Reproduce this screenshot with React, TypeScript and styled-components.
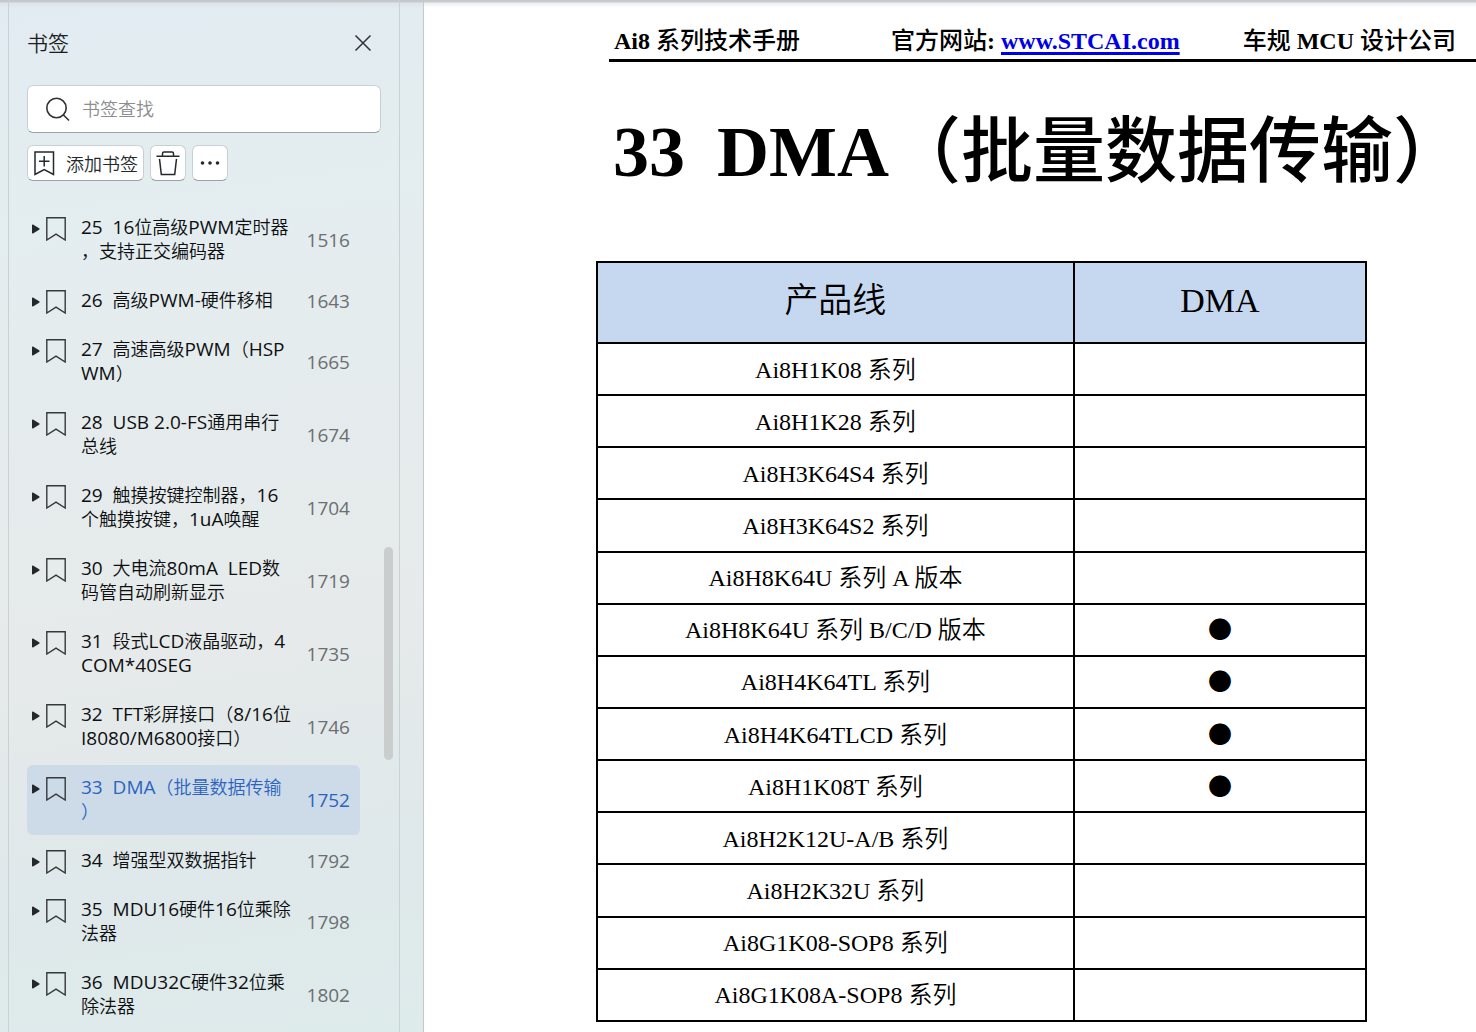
import React, { useState } from "react";
import styled, { createGlobalStyle } from "styled-components";

const GlobalStyle = createGlobalStyle`
  * { box-sizing: border-box; }
  body { margin: 0; background: #fff; }
  button, input { font: inherit; }
`;

const Window = styled.div`
  display: flex;
  height: 100vh;
  overflow: hidden;
  background:
    linear-gradient(#c3c7c9 0, #c9cdcf 2px, rgba(225, 228, 230, 0.6) 3px, rgba(255, 255, 255, 0) 8px) top / 100% 8px no-repeat,
    #fff;
`;

const Sidebar = styled.aside`
  display: flex;
  flex: none;
  width: 424px;
  padding: 0 23px 0 8px;
  border-right: 1px solid #c3cacc;
  background:
    linear-gradient(#c0c6c9 0, #c6ccce 2px, rgba(218, 224, 228, 0.6) 3px, rgba(226, 235, 240, 0) 8px) top / 100% 8px no-repeat,
    linear-gradient(172deg, #e2ebf2 0%, #e3edf0 14%, #e5ecee 35%, #e6eaea 62%, #dfe8ea 82%, #deebeb 100%);
  font-family: "Open Sans", "Noto Sans CJK SC DemiLight", "Noto Sans CJK SC", sans-serif;
  font-weight: 400;
  color: #1c1f21;
`;

const Panel = styled.div`
  display: flex;
  flex: 1;
  flex-direction: column;
  min-width: 0;
  padding: 24px 6px 0 18px;
  border: solid #c9d1d4;
  border-width: 0 1px;
`;

const PanelHeader = styled.header`
  display: flex;
  align-items: center;
  justify-content: space-between;
  height: 38px;
  padding-right: 21px;
`;

const PanelTitle = styled.h2`
  margin: 0;
  font-size: 21px;
  font-weight: 400;
  line-height: 28px;
`;

const IconButton = styled.button`
  display: flex;
  padding: 0;
  border: 0;
  background: none;
  color: #303336;
`;

const SearchBox = styled.label`
  display: flex;
  align-items: center;
  gap: 11px;
  height: 48px;
  margin: 23px 12px 12px 0;
  padding: 0 18px;
  border: 1px solid #c7d0d4;
  border-bottom-color: #99a2a5;
  border-radius: 6px;
  background: #fff;
  color: #303336;
`;

const SearchInput = styled.input`
  flex: 1;
  min-width: 0;
  padding: 0;
  border: 0;
  outline: 0;
  background: none;
  font-size: 18px;
  &::placeholder { color: #8b8e90; opacity: 1; }
`;

const Toolbar = styled.div`
  display: flex;
  gap: 6px;
  margin-bottom: 24px;
`;

const ToolButton = styled.button`
  display: flex;
  align-items: center;
  justify-content: center;
  gap: 11px;
  min-width: 36px;
  height: 36px;
  padding: 0 5px;
  border: 1px solid #c7d0d4;
  border-bottom-color: #99a2a5;
  border-radius: 6px;
  background: #fff;
  color: #25282a;
  font-size: 18px;
`;

const ListArea = styled.div`
  display: flex;
  flex: 1;
  justify-content: space-between;
  min-height: 0;
`;

const BookmarkList = styled.ul`
  display: flex;
  flex-direction: column;
  gap: 3px;
  width: 333px;
  margin: 0;
  padding: 0;
  overflow: hidden;
  list-style: none;
`;

const BookmarkRow = styled.li<{ $active: boolean }>`
  display: grid;
  flex: none;
  grid-template-columns: 14px 20px 1fr auto;
  padding: 10px 10px 12px 5px;
  border-radius: 6px;
  background: ${(p) => (p.$active ? "#cddbe9" : "transparent")};
  color: ${(p) => (p.$active ? "#2c64bd" : "#0d0f10")};
  cursor: pointer;
`;

const Expander = styled.button`
  display: flex;
  align-items: center;
  height: 24px;
  padding: 4px 0 0;
  border: 0;
  background: none;
  color: #25282a;
`;

const BookmarkMark = styled.span`
  height: 24px;
  padding-top: 2px;
  color: #36393b;
`;

const BookmarkName = styled.span`
  display: flex;
  flex-direction: column;
  padding-left: 15px;
  font-size: 19px;
  line-height: 24px;
  white-space: pre;
`;

const NameLine = styled.span`
  height: 24px;
`;

const NameHan = styled.span`
  font-size: 18px;
`;

const PageNumber = styled.span<{ $active: boolean }>`
  align-self: center;
  padding-top: 2px;
  font-size: 19px;
  line-height: 22px;
  color: ${(p) => (p.$active ? "#2c64bd" : "#6b6f72")};
`;

const ScrollTrack = styled.div`
  display: grid;
  grid-template-rows: 342fr 213fr 272fr;
  width: 9px;
`;

const ScrollThumb = styled.div`
  grid-row: 2;
  border-radius: 5px;
  background: #c9cdce;
`;

const Page = styled.main`
  flex: 1;
  min-width: 0;
  padding-top: 24px;
  overflow: hidden;
  font-family: "Liberation Serif", "Noto Sans CJK SC DemiLight", "Noto Sans CJK SC", serif;
  color: #000;
`;

const RunningHead = styled.header`
  display: flex;
  height: 38px;
  margin-left: 185px;
  padding-left: 5px;
  border-bottom: 3px solid #000;
  font-size: 24px;
  font-weight: 700;
  line-height: 35px;
  white-space: nowrap;
`;

const HeadItem = styled.span`
  margin-right: 63px;
  &:first-child { margin-right: 91px; }
`;

const Han = styled.span`
  font-family: "Liberation Serif", "Noto Sans CJK SC", serif;
  font-weight: 500;
`;

const SiteLink = styled.a`
  color: #0000e8;
  text-decoration: underline 3px;
  text-underline-offset: 3px;
`;

const ChapterTitle = styled.h1`
  display: flex;
  gap: 32px;
  margin: 42px 0 0 189px;
  font-size: 72px;
  font-weight: 700;
  line-height: 96px;
  white-space: nowrap;
`;

const ProductTable = styled.table`
  width: 771px;
  height: 761px;
  margin: 61px 0 0 172px;
  border-collapse: collapse;
  table-layout: fixed;
  text-align: center;
`;

const HeadCell = styled.th<{ $width: string }>`
  width: ${(p) => p.$width};
  height: 81px;
  padding: 0 0 4px;
  border: 2px solid #000;
  background: #c6d8ef;
  font-size: 34px;
  font-weight: 400;
  line-height: 40px;
`;

const Cell = styled.td`
  padding: 1px 0 0;
  border: 2px solid #000;
  font-size: 24px;
  line-height: 32px;
`;

const Dot = styled.span`
  display: block;
  padding-bottom: 4px;
  font-family: "Noto Sans CJK SC", sans-serif;
  line-height: 28px;
`;

const bookmarks = [
  { lines: ["25  16位高级PWM定时器", "，支持正交编码器"], page: 1516 },
  { lines: ["26  高级PWM-硬件移相"], page: 1643 },
  { lines: ["27  高速高级PWM（HSP", "WM）"], page: 1665 },
  { lines: ["28  USB 2.0-FS通用串行", "总线"], page: 1674 },
  { lines: ["29  触摸按键控制器，16", "个触摸按键，1uA唤醒"], page: 1704 },
  { lines: ["30  大电流80mA  LED数", "码管自动刷新显示"], page: 1719 },
  { lines: ["31  段式LCD液晶驱动，4", "COM*40SEG"], page: 1735 },
  { lines: ["32  TFT彩屏接口（8/16位", "I8080/M6800接口）"], page: 1746 },
  { lines: ["33  DMA（批量数据传输", "）"], page: 1752 },
  { lines: ["34  增强型双数据指针"], page: 1792 },
  { lines: ["35  MDU16硬件16位乘除", "法器"], page: 1798 },
  { lines: ["36  MDU32C硬件32位乘", "除法器"], page: 1802 },
];

const products = [
  { name: "Ai8H1K08 系列", dma: false },
  { name: "Ai8H1K28 系列", dma: false },
  { name: "Ai8H3K64S4 系列", dma: false },
  { name: "Ai8H3K64S2 系列", dma: false },
  { name: "Ai8H8K64U 系列 A 版本", dma: false },
  { name: "Ai8H8K64U 系列 B/C/D 版本", dma: true },
  { name: "Ai8H4K64TL 系列", dma: true },
  { name: "Ai8H4K64TLCD 系列", dma: true },
  { name: "Ai8H1K08T 系列", dma: true },
  { name: "Ai8H2K12U-A/B 系列", dma: false },
  { name: "Ai8H2K32U 系列", dma: false },
  { name: "Ai8G1K08-SOP8 系列", dma: false },
  { name: "Ai8G1K08A-SOP8 系列", dma: false },
];

const CloseIcon = () => (
  <svg width="18" height="18" viewBox="0 0 18 18" fill="none" stroke="currentColor" strokeWidth="1.5">
    <path d="M1.5 1.5 16.5 16.5M16.5 1.5 1.5 16.5" />
  </svg>
);

const SearchIcon = () => (
  <svg width="25" height="25" viewBox="0 0 25 25" fill="none" stroke="currentColor" strokeWidth="1.6">
    <circle cx="10.5" cy="11" r="9.7" />
    <path d="M17 17.5 23 23.5" />
  </svg>
);

const BookmarkIcon = () => (
  <svg width="20" height="24" viewBox="0 0 20 24" fill="none" stroke="currentColor" strokeWidth="1.4" display="block">
    <path d="M.8.8H19.2V23L10 17.2.8 23Z" />
  </svg>
);

const AddBookmarkIcon = () => (
  <svg width="22" height="25" viewBox="0 0 22 25" fill="none" stroke="currentColor" strokeWidth="1.5">
    <path d="M2 1H20.5V23.5L11.2 18.5 2 23.5ZM11.2 5V15.5M6 10.2H16.5" />
  </svg>
);

const TrashIcon = () => (
  <svg width="24" height="26" viewBox="0 0 24 26" fill="none" stroke="currentColor" strokeWidth="1.5">
    <path d="M.5 6.2H23.5M6.5 6V3.5Q6.5 2 8 2H16Q17.5 2 17.5 3.5V6M3.5 8.8 5.3 24.6H18.7L20.5 8.8" />
  </svg>
);

const MoreIcon = () => (
  <svg width="20" height="4" viewBox="0 0 20 4" fill="currentColor">
    <circle cx="2.5" cy="2" r="1.8" />
    <circle cx="10" cy="2" r="1.8" />
    <circle cx="17.5" cy="2" r="1.8" />
  </svg>
);

const ArrowIcon = () => (
  <svg width="8" height="10" viewBox="0 0 8 10" fill="currentColor">
    <path d="M0 .8 1 .5 7.5 4.4V5.6L1 9.5 0 9.2Z" />
  </svg>
);

// Chinese runs are set one pixel smaller than the Latin letters beside them.
const splitRuns = (line: string) =>
  line
    .split(/([^\x00-\xff]+)/)
    .filter(Boolean)
    .map((run, i) => (run.charCodeAt(0) > 255 ? <NameHan key={i}>{run}</NameHan> : run));

export default function App() {
  const [current, setCurrent] = useState(1752);

  return (
    <>
      <GlobalStyle />
      <Window>
        <Sidebar>
          <Panel>
            <PanelHeader>
              <PanelTitle>书签</PanelTitle>
              <IconButton type="button" aria-label="关闭">
                <CloseIcon />
              </IconButton>
            </PanelHeader>
            <SearchBox>
              <SearchIcon />
              <SearchInput type="text" placeholder="书签查找" aria-label="书签查找" />
            </SearchBox>
            <Toolbar>
              <ToolButton type="button">
                <AddBookmarkIcon />
                添加书签
              </ToolButton>
              <ToolButton type="button" aria-label="删除书签">
                <TrashIcon />
              </ToolButton>
              <ToolButton type="button" aria-label="更多">
                <MoreIcon />
              </ToolButton>
            </Toolbar>
            <ListArea>
              <BookmarkList>
                {bookmarks.map((b) => (
                  <BookmarkRow key={b.page} $active={b.page === current} onClick={() => setCurrent(b.page)}>
                    <Expander type="button" aria-label="展开">
                      <ArrowIcon />
                    </Expander>
                    <BookmarkMark>
                      <BookmarkIcon />
                    </BookmarkMark>
                    <BookmarkName>
                      {b.lines.map((line) => (
                        <NameLine key={line}>{splitRuns(line)}</NameLine>
                      ))}
                    </BookmarkName>
                    <PageNumber $active={b.page === current}>{b.page}</PageNumber>
                  </BookmarkRow>
                ))}
              </BookmarkList>
              <ScrollTrack>
                <ScrollThumb />
              </ScrollTrack>
            </ListArea>
          </Panel>
        </Sidebar>
        <Page>
          <RunningHead>
            <HeadItem>
              Ai8 <Han>系列技术手册</Han>
            </HeadItem>
            <HeadItem>
              <Han>官方网站</Han>: <SiteLink href="#site">www.STCAI.com</SiteLink>
            </HeadItem>
            <HeadItem>
              <Han>车规</Han> MCU <Han>设计公司</Han>
            </HeadItem>
          </RunningHead>
          <ChapterTitle>
            <span>33</span>
            <span>
              DMA<Han>（批量数据传输）</Han>
            </span>
          </ChapterTitle>
          <ProductTable>
            <thead>
              <tr>
                <HeadCell $width="62%">产品线</HeadCell>
                <HeadCell $width="38%">DMA</HeadCell>
              </tr>
            </thead>
            <tbody>
              {products.map((p) => (
                <tr key={p.name}>
                  <Cell>{p.name}</Cell>
                  <Cell>{p.dma && <Dot>●</Dot>}</Cell>
                </tr>
              ))}
            </tbody>
          </ProductTable>
        </Page>
      </Window>
    </>
  );
}
